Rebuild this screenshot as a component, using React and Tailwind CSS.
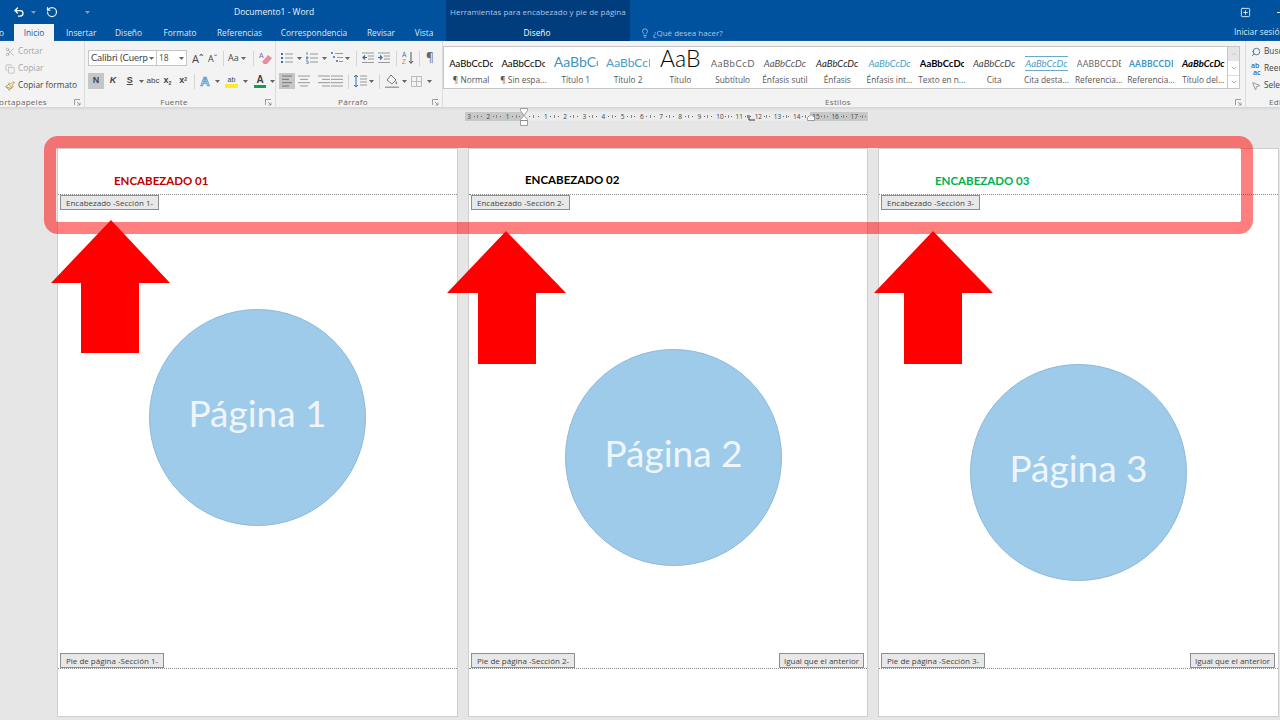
import React from "react";
import { Undo2, RotateCcw, Scissors, Copy, Paintbrush, Lightbulb, Search, MousePointer2, ChevronUp, ChevronDown, SquarePlus } from "lucide-react";

const Caret = ({ className = "" }) => (
  <svg width="5" height="3" viewBox="0 0 5 3" className={`shrink-0 ${className}`}>
    <path d="M0 0h5L2.5 3z" fill="#666" />
  </svg>
);

// ribbon line glyphs: each row is [x1, x2]
const Lines = ({ rows, color = "#777" }) => (
  <svg width="12" height="12" viewBox="0 0 12 12" className="shrink-0">
    {rows.map((r, i) => (
      <rect key={i} x={r[0]} y={1 + i * (10 / (rows.length - 1 || 1)) - 0.5} width={r[1] - r[0]} height="1" fill={color} />
    ))}
  </svg>
);

const Launcher = ({ className = "" }) => (
  <svg width="7" height="7" viewBox="0 0 7 7" className={className}>
    <path d="M0.5 6V0.5H6M3 3l3 3M6 3.5V6H3.5" stroke="#888" strokeWidth="0.8" fill="none" />
  </svg>
);

const Sep = ({ className = "" }) => <div className={`w-px h-[15px] bg-[#d4d4d4] shrink-0 ${className}`}></div>;

const BulletIcon = () => (
  <svg width="12" height="12" viewBox="0 0 12 12" className="shrink-0">
    <path d="M0 1h2v2H0zM0 5h2v2H0zM0 9h2v2H0z" fill="#3a6ea5" />
    <path d="M4 2h8M4 6h8M4 10h8" stroke="#999" strokeWidth="1" />
  </svg>
);

const NumberIcon = () => (
  <svg width="12" height="12" viewBox="0 0 12 12" className="shrink-0">
    <path d="M1 0v3M0 5h2v1H0v1h2M0 9h2v3H0" stroke="#3a6ea5" strokeWidth="0.8" fill="none" />
    <path d="M4 2h8M4 6h8M4 10h8" stroke="#999" strokeWidth="1" />
  </svg>
);

const MultiIcon = () => (
  <svg width="12" height="12" viewBox="0 0 12 12" className="shrink-0">
    <path d="M0 1h2M2 5h2M5 9h2" stroke="#3a6ea5" strokeWidth="1.4" />
    <path d="M4 1.5h8M6 5.5h6M8 9.5h4" stroke="#999" strokeWidth="1" />
  </svg>
);

const IndentIcon = ({ flip }) => (
  <svg width="12" height="12" viewBox="0 0 12 12" className="shrink-0">
    <path d="M0 1h12M6 4h6M6 7h6M0 10.5h12" stroke="#999" strokeWidth="1" />
    <path d={flip ? "M0 5.5h3M2 3.5l2 2-2 2" : "M5 5.5H1M3 3.5l-2 2 2 2"} stroke="#2b6cb0" strokeWidth="1.2" fill="none" />
  </svg>
);

const SortIcon = () => (
  <svg width="12" height="14" viewBox="0 0 12 14" className="shrink-0">
    <text x="0" y="6" fontSize="6.5" fill="#3a6ea5" fontFamily="Liberation Sans">A</text>
    <text x="0" y="13" fontSize="6.5" fill="#c98a2b" fontFamily="Liberation Sans">Z</text>
    <path d="M9 1v11M7 10l2 2.5 2-2.5" stroke="#555" strokeWidth="1" fill="none" />
  </svg>
);

const SpacingIcon = () => (
  <svg width="13" height="14" viewBox="0 0 13 14" className="shrink-0">
    <path d="M2 1v12M0 3l2-2 2 2M0 11l2 2 2-2" stroke="#2b6cb0" strokeWidth="1" fill="none" />
    <path d="M6 2h7M6 5h7M6 8h7M6 11h7" stroke="#999" strokeWidth="1" />
  </svg>
);

const FillIcon = () => (
  <svg width="14" height="15" viewBox="0 0 14 15" className="shrink-0">
    <path d="M6 1l5 5-4 4-5-4z" fill="none" stroke="#777" strokeWidth="1" />
    <path d="M11 7c1 1.5 1.5 2 1 3-1 .5-2-.5-1-3z" fill="#777" />
    <rect x="0" y="12.5" width="14" height="1.5" fill="#a0a0a0" />
  </svg>
);

const BorderIcon = () => (
  <svg width="11" height="11" viewBox="0 0 11 11" className="shrink-0">
    <path d="M.5.5h10v10H.5zM5.5.5v10M.5 5.5h10" stroke="#bbb" strokeWidth="1" fill="none" />
  </svg>
);

const EraserIcon = () => (
  <svg width="13" height="13" viewBox="0 0 13 13" className="shrink-0">
    <path d="M3 10l6-7 4 3-5 6H5z" fill="#e98ba0" />
    <text x="0" y="6" fontSize="7" fill="#8a5aa5" fontFamily="Liberation Sans">A</text>
  </svg>
);

const ReplaceIcon = () => (
  <div className="w-[12px] text-[7px] leading-[7px] text-[#2b6cb0] font-semibold shrink-0">
    <div className="h-[7px]">ab</div>
    <div className="h-[7px] pl-[2px]">ac</div>
  </div>
);

const galleryItems = [
  { preview: "AaBbCcDc", label: "¶ Normal", cls: "text-[9.5px] text-black" },
  { preview: "AaBbCcDc", label: "¶ Sin espa...", cls: "text-[9.5px] text-black" },
  { preview: "AaBbCc", label: "Título 1", cls: "text-[14px] text-[#3f94c6]" },
  { preview: "AaBbCcD", label: "Título 2", cls: "text-[12px] text-[#45a0c6]" },
  { preview: "AaB", label: "Título", cls: "text-[23px] font-light text-black" },
  { preview: "AaBbCcD", label: "Subtítulo", cls: "text-[9.5px] tracking-[0.6px] text-[#666]" },
  { preview: "AaBbCcDc", label: "Énfasis sutil", cls: "text-[9.5px] italic text-[#555]" },
  { preview: "AaBbCcDc", label: "Énfasis", cls: "text-[9.5px] italic text-[#222]" },
  { preview: "AaBbCcDc", label: "Énfasis int...", cls: "text-[9.5px] italic text-[#48a0c8]" },
  { preview: "AaBbCcDc", label: "Texto en n...", cls: "text-[9.5px] font-bold text-black" },
  { preview: "AaBbCcDc", label: "Cita", cls: "text-[9.5px] italic text-[#444]" },
  { preview: "AaBbCcDc", label: "Cita desta...", cls: "text-[9.5px] italic text-[#48a0c8] border-y border-[#6aaac8]" },
  { preview: "AABBCCDE", label: "Referencia...", cls: "text-[8.5px] tracking-[0.2px] text-[#666]" },
  { preview: "AABBCCDE", label: "Referencia...", cls: "text-[8.5px] tracking-[0.2px] font-bold text-[#3f94c6]" },
  { preview: "AaBbCcDc", label: "Título del...", cls: "text-[9.5px] italic font-bold text-black" },
];

const rulerNumbers = [3, 2, 1, "", 1, 2, 3, 4, 5, 6, 7, 8, 9, 10, 11, 12, 13, 14, 15, 16, 17];

const pages = [
  {
    id: 1,
    heading: "ENCABEZADO 01",
    headCls: "text-[#c00000] pl-[56px] pt-[24px]",
    circle: "left-[91px] top-[160px]",
    width: "w-[401px]",
  },
  {
    id: 2,
    heading: "ENCABEZADO 02",
    headCls: "text-black pl-[56px] pt-[23px]",
    circle: "left-[96px] top-[200px]",
    width: "w-[400px]",
  },
  {
    id: 3,
    heading: "ENCABEZADO 03",
    headCls: "text-[#00b050] pl-[56px] pt-[24px]",
    circle: "left-[91px] top-[215px]",
    width: "w-[401px]",
  },
];

const Tag = ({ children, className = "px-[5px]" }) => (
  <div className={`h-[15px] flex items-center bg-[#e8e8e8] border border-[#8e8e8e] text-[8px] text-[#444] whitespace-nowrap ${className}`}>
    {children}
  </div>
);

const Page = ({ page }) => (
  <div className={`relative ${page.width} h-[569px] bg-white border border-[#cfcfcf] flex flex-col shrink-0`}>
    <div className={`h-[45px] text-[11.5px] font-bold leading-[15px] whitespace-nowrap ${page.headCls}`} style={{ fontFamily: "Lato, sans-serif" }}>
      {page.heading}
    </div>
    <div className="border-t border-dotted border-[#888]"></div>
    <div className="pl-[2px] flex">
      <Tag>Encabezado -Sección {page.id}-</Tag>
    </div>
    <div className="flex-1"></div>
    <div className="flex justify-between pl-[2px] pr-[3px]">
      <Tag>Pie de página -Sección {page.id}-</Tag>
      {page.id > 1 && <Tag className="px-[4px]">Igual que el anterior</Tag>}
    </div>
    <div className="border-t border-dotted border-[#888] mb-[47px]"></div>
    <div
      className={`absolute ${page.circle} w-[217px] h-[217px] rounded-full bg-[#9fcbea] border border-[#8db9d9] flex items-center justify-center text-[37px] text-[#eef6fc] pb-[10px]`}
      style={{ fontFamily: "Lato, sans-serif" }}
    >
      Página {page.id}
    </div>
  </div>
);

const GroupLabel = ({ children }) => (
  <div className="mt-auto h-[11px] flex items-center justify-center pr-[12px] text-[8px] tracking-[0.3px] text-[#666]">{children}</div>
);

export default function App() {
  return (
    <div className="relative w-[1280px] h-[720px] overflow-hidden bg-[#e6e6e6]" style={{ fontFamily: '"Open Sans", sans-serif' }}>
      {/* title bar + tabs */}
      <div className="flex h-[41px] bg-[#01529e] text-[#dce8f4]">
        <div className="w-[446px] shrink-0 flex flex-col">
          <div className="h-[24px] relative flex items-center">
            <Undo2 size={12} strokeWidth={2.5} className="ml-[13px] text-white" />
            <Caret className="ml-[6px] invert" />
            <RotateCcw size={12} strokeWidth={2.5} className="ml-[10px] text-[#e8f0f8]" />
            <Caret className="ml-[27px] invert" />
            <div className="ml-[144px] text-[8.5px] text-[#e8f0f8] whitespace-nowrap">Documento1 - Word</div>
          </div>
          <div className="h-[17px] flex items-end text-[8.3px] whitespace-nowrap">
            <div className="w-[14px] h-[17px] leading-[17px] overflow-hidden flex justify-end pr-[10px]">Archivo</div>
            <div className="w-[40px] h-[17px] leading-[17px] text-center bg-[#f3f3f3] text-[#1a5a9c]">Inicio</div>
            <div className="w-[12px]"></div>
            <div className="w-[30px] text-center leading-[17px]">Insertar</div>
            <div className="w-[18px]"></div>
            <div className="w-[29px] text-center leading-[17px]">Diseño</div>
            <div className="w-[20px]"></div>
            <div className="w-[34px] text-center leading-[17px]">Formato</div>
            <div className="w-[20px]"></div>
            <div className="w-[45px] text-center leading-[17px]">Referencias</div>
            <div className="w-[18px]"></div>
            <div className="w-[68px] text-center leading-[17px]">Correspondencia</div>
            <div className="w-[19px]"></div>
            <div className="w-[28px] text-center leading-[17px]">Revisar</div>
            <div className="w-[19px]"></div>
            <div className="w-[20px] text-center leading-[17px]">Vista</div>
          </div>
        </div>
        <div className="w-[184px] shrink-0 bg-[#013c7c] flex flex-col">
          <div className="h-[24px] leading-[24px] pl-[4px] text-[8px] text-[#a8c6e6] whitespace-nowrap">Herramientas para encabezado y pie de página</div>
          <div className="h-[17px] leading-[17px] text-center text-[8.3px] text-white pr-[2px]">Diseño</div>
        </div>
        <div className="flex-1 flex flex-col">
          <div className="h-[24px] flex justify-end items-center">
            <SquarePlus size={11} strokeWidth={2} className="text-[#e8f0f8] mr-[26px]" />
            <div className="w-[6px] h-px bg-[#e8f0f8] -mr-[3px]"></div>
          </div>
          <div className="h-[17px] flex items-center text-[8px] whitespace-nowrap">
            <Lightbulb size={10} strokeWidth={1.5} className="ml-[10px] text-[#cfe0f0]" />
            <div className="ml-[3px] text-[#a8c6e6]">¿Qué desea hacer?</div>
            <div className="ml-auto w-[46px] overflow-hidden text-[8.3px]">Iniciar sesión</div>
          </div>
        </div>
      </div>

      {/* ribbon */}
      <div className="flex h-[67px] bg-[#f3f3f3] border-b border-[#d6d6d6] text-[#444] shadow-[0_1px_2px_#d8d8d8]">
        {/* portapapeles */}
        <div className="relative w-[85px] shrink-0 border-r border-[#dcdcdc] flex flex-col">
          <div className="flex-1 pt-[2px] text-[8.3px] flex flex-col">
            <div className="h-[17px] flex items-center text-[#a5a5a5]">
              <Scissors size={10} className="ml-[5px] text-[#aaa]" />
              <span className="ml-[3px]">Cortar</span>
            </div>
            <div className="h-[17px] flex items-center text-[#a5a5a5]">
              <Copy size={10} className="ml-[5px] text-[#bbb]" />
              <span className="ml-[3px]">Copiar</span>
            </div>
            <div className="h-[17px] flex items-center text-[#444] whitespace-nowrap">
              <Paintbrush size={10} className="ml-[5px] text-[#b8862f]" />
              <span className="ml-[3px]">Copiar formato</span>
            </div>
          </div>
          <div className="h-[11px] flex items-center text-[8px] tracking-[0.3px] text-[#666] whitespace-nowrap overflow-hidden">
            <span className="-ml-[6px]">Portapapeles</span>
          </div>
          <Launcher className="absolute right-[3px] bottom-[1px]" />
        </div>

        {/* fuente */}
        <div className="relative w-[191px] shrink-0 border-r border-[#dcdcdc] flex flex-col">
          <div className="h-[16px] mt-[9px] ml-[3px] flex items-center">
            <div className="w-[69px] h-[16px] bg-white border border-[#c6c6c6] flex items-center px-[2px] text-[9.5px] whitespace-nowrap overflow-hidden" style={{ fontFamily: "Lato, sans-serif" }}>
              <span className="w-[58px] overflow-hidden">Calibri (Cuerpo)</span>
              <Caret className="ml-[1px]" />
            </div>
            <div className="w-[30px] h-[16px] bg-white border border-l-0 border-[#c6c6c6] flex items-center justify-between px-[2px] text-[8.5px]">
              18
              <Caret />
            </div>
            <span className="ml-[5px] w-[11px] text-[11px] leading-none">Aˆ</span>
            <span className="ml-[5px] w-[11px] text-[9px] leading-none">Aˇ</span>
            <Sep className="ml-[4px]" />
            <span className="ml-[4px] text-[9px]">Aa</span>
            <Caret className="ml-[2px]" />
            <Sep className="ml-[7px]" />
            <span className="ml-[5px]"><EraserIcon /></span>
          </div>
          <div className="h-[16px] mt-[7px] ml-[3px] flex items-center text-[9px] text-[#444] font-semibold" style={{ fontFamily: '"Liberation Sans", sans-serif' }}>
            <div className="w-[16px] h-[16px] bg-[#c6c6c6] flex items-center justify-center font-bold">N</div>
            <span className="ml-[6px] w-[10px] italic font-bold">K</span>
            <span className="ml-[7px] w-[8px] underline">S</span>
            <Caret className="ml-[4px]" />
            <span className="ml-[3px] w-[14px] text-[8px] font-normal">abc</span>
            <span className="ml-[3px] w-[12px]">x<sub className="text-[5px]">2</sub></span>
            <span className="ml-[4px] w-[11px]">x<sup className="text-[5px]">2</sup></span>
            <Sep className="ml-[4px]" />
            <span className="ml-[5px] w-[13px] text-[13px] font-bold leading-none text-[#b8d4ee]" style={{ WebkitTextStroke: "0.6px #2b7cd3" }}>A</span>
            <Caret className="ml-[2px]" />
            <div className="ml-[5px] w-[13px] flex flex-col items-center">
              <span className="text-[7px] leading-[9px] font-normal">ab</span>
              <div className="w-[13px] h-[4px] bg-[#ffea30]"></div>
            </div>
            <Caret className="ml-[5px]" />
            <div className="ml-[6px] w-[12px] flex flex-col items-center">
              <span className="text-[10px] leading-[10px] font-bold">A</span>
              <div className="w-[12px] h-[3px] bg-[#10a050]"></div>
            </div>
            <Caret className="ml-[4px]" />
          </div>
          <GroupLabel>Fuente</GroupLabel>
          <Launcher className="absolute right-[3px] bottom-[1px]" />
        </div>

        {/* parrafo */}
        <div className="relative w-[167px] shrink-0 border-r border-[#dcdcdc] flex flex-col">
          <div className="h-[16px] mt-[9px] ml-[5px] flex items-center">
            <BulletIcon />
            <Caret className="ml-[4px]" />
            <span className="ml-[4px]"><NumberIcon /></span>
            <Caret className="ml-[4px]" />
            <span className="ml-[4px]"><MultiIcon /></span>
            <Caret className="ml-[2px]" />
            <Sep className="ml-[6px]" />
            <span className="ml-[5px]"><IndentIcon /></span>
            <span className="ml-[4px]"><IndentIcon flip /></span>
            <Sep className="ml-[6px]" />
            <span className="ml-[5px]"><SortIcon /></span>
            <Sep className="ml-[5px]" />
            <span className="ml-[6px] text-[12px] leading-none text-[#666]">¶</span>
          </div>
          <div className="h-[16px] mt-[7px] ml-[3px] flex items-center">
            <div className="w-[16px] h-[16px] bg-[#c6c6c6] flex items-center justify-center">
              <Lines rows={[[1, 11], [1, 8], [1, 11], [1, 8]]} />
            </div>
            <span className="ml-[3px]"><Lines rows={[[0, 12], [2, 10], [0, 12], [2, 10]]} color="#999" /></span>
            <span className="ml-[8px]"><Lines rows={[[0, 12], [4, 12], [0, 12], [4, 12]]} color="#999" /></span>
            <span className="ml-[1px]"><Lines rows={[[0, 12], [0, 12], [0, 12], [0, 12]]} color="#999" /></span>
            <Sep className="ml-[5px]" />
            <span className="ml-[5px]"><SpacingIcon /></span>
            <Caret className="ml-[2px]" />
            <Sep className="ml-[5px]" />
            <span className="ml-[5px]"><FillIcon /></span>
            <Caret className="ml-[3px]" />
            <span className="ml-[4px]"><BorderIcon /></span>
            <Caret className="ml-[5px]" />
          </div>
          <GroupLabel>Párrafo</GroupLabel>
          <Launcher className="absolute right-[3px] bottom-[1px]" />
        </div>

        {/* estilos */}
        <div className="relative w-[803px] shrink-0 border-r border-[#dcdcdc] flex flex-col">
          <div className="mt-[5px] w-[797px] h-[43px] bg-white border border-[#c6c6c6] flex">
            <div className="flex flex-1 pl-[1px] overflow-hidden" style={{ fontFamily: "Lato, sans-serif" }}>
              {galleryItems.map((item, i) => (
                <div key={i} className="w-[52.3px] shrink-0 flex flex-col items-center">
                  <div className="h-[27px] w-[44px] flex items-center overflow-hidden">
                    <div className="w-[44px] text-center whitespace-nowrap">
                      <span className={`inline-block leading-[13px] ${item.cls}`}>{item.preview}</span>
                    </div>
                  </div>
                  <div className="text-[8.3px] leading-[11px] text-[#555] whitespace-nowrap" style={{ fontFamily: '"Open Sans", sans-serif' }}>
                    {item.label}
                  </div>
                </div>
              ))}
            </div>
            <div className="w-[12px] border-l border-[#c6c6c6] flex flex-col items-center text-[#888]">
              <div className="h-[14px] w-full bg-[#e6e6e6] flex items-center justify-center">
                <ChevronUp size={8} className="text-[#bbb]" />
              </div>
              <div className="h-[14px] w-full flex items-center justify-center">
                <ChevronDown size={8} />
              </div>
              <div className="h-[13px] w-full border-t border-[#dcdcdc] flex items-center justify-center">
                <ChevronDown size={8} />
              </div>
            </div>
          </div>
          <GroupLabel>Estilos</GroupLabel>
          <Launcher className="absolute right-[3px] bottom-[1px]" />
        </div>

        {/* edicion */}
        <div className="flex-1 flex flex-col pl-[5px] overflow-hidden text-[8.3px] whitespace-nowrap">
          <div className="pt-[2px] flex-1">
            <div className="h-[17px] flex items-center">
              <Search size={10} className="text-[#2b6cb0] shrink-0 -scale-x-100" />
              <span className="ml-[3px]">Buscar</span>
            </div>
            <div className="h-[17px] flex items-center">
              <ReplaceIcon />
              <span className="ml-[1px]">Reemplazar</span>
            </div>
            <div className="h-[17px] flex items-center">
              <MousePointer2 size={10} className="text-[#888] shrink-0" />
              <span className="ml-[3px]">Seleccionar</span>
            </div>
          </div>
          <div className="h-[11px] flex items-center text-[8px] tracking-[0.3px] text-[#666] pl-[18px]">Edición</div>
        </div>
      </div>

      {/* ruler */}
      <div className="relative ml-[465px] mt-[4px] w-[404px] h-[9px] flex text-[6.5px] leading-[9px] text-[#444] bg-[#ececec]">
        {rulerNumbers.map((n, i) => (
          <div key={i} className={`w-[19.2px] shrink-0 flex items-center justify-around px-[1px] ${i < 3 || i > 17 ? "bg-[#c8c8c8]" : ""}`}>
            <span>{n}</span>
            <span className="w-px h-px bg-[#666]"></span>
            <span className="w-px h-[3px] bg-[#888]"></span>
            <span className="w-px h-px bg-[#666]"></span>
          </div>
        ))}
        <svg className="absolute left-[55px] -top-[4px]" width="8" height="18" viewBox="0 0 8 18">
          <path d="M.5.5h7v2L4 7.5.5 2.5zM4 7.5l3.5 4v1h-7v-1zM.5 12.5h7v5h-7z" fill="#fff" stroke="#888" strokeWidth="0.8" />
        </svg>
        <svg className="absolute left-[283px] top-[3px]" width="7" height="7" viewBox="0 0 7 7">
          <path d="M1 0v5h6" fill="none" stroke="#333" strokeWidth="1" />
        </svg>
        <svg className="absolute left-[342px] top-[2px]" width="8" height="7" viewBox="0 0 8 7">
          <path d="M4 .5l3.5 3v3h-7v-3z" fill="#fff" stroke="#888" strokeWidth="0.8" />
        </svg>
      </div>

      {/* pages */}
      <div className="flex gap-[10px] pl-[57px] pt-[27px]">
        {pages.map((p) => (
          <Page key={p.id} page={p} />
        ))}
      </div>

      {/* highlight over the headers */}
      <div className="absolute left-[44px] top-[136px] w-[1209px] h-[98px] rounded-[14px] border-[12px] border-[#ff0000]/50"></div>

      {/* arrows */}
      <svg className="absolute left-0 top-0" width="1280" height="720" viewBox="0 0 1280 720">
        <polygon points="111,220 170,283 139,283 139,353 81,353 81,283 51,283" fill="#ff0000" />
        <polygon points="506,231 566,293 536,293 536,364 478,364 478,293 447,293" fill="#ff0000" />
        <polygon points="933,231 993,293 962,293 962,364 904,364 904,293 874,293" fill="#ff0000" />
      </svg>
    </div>
  );
}
